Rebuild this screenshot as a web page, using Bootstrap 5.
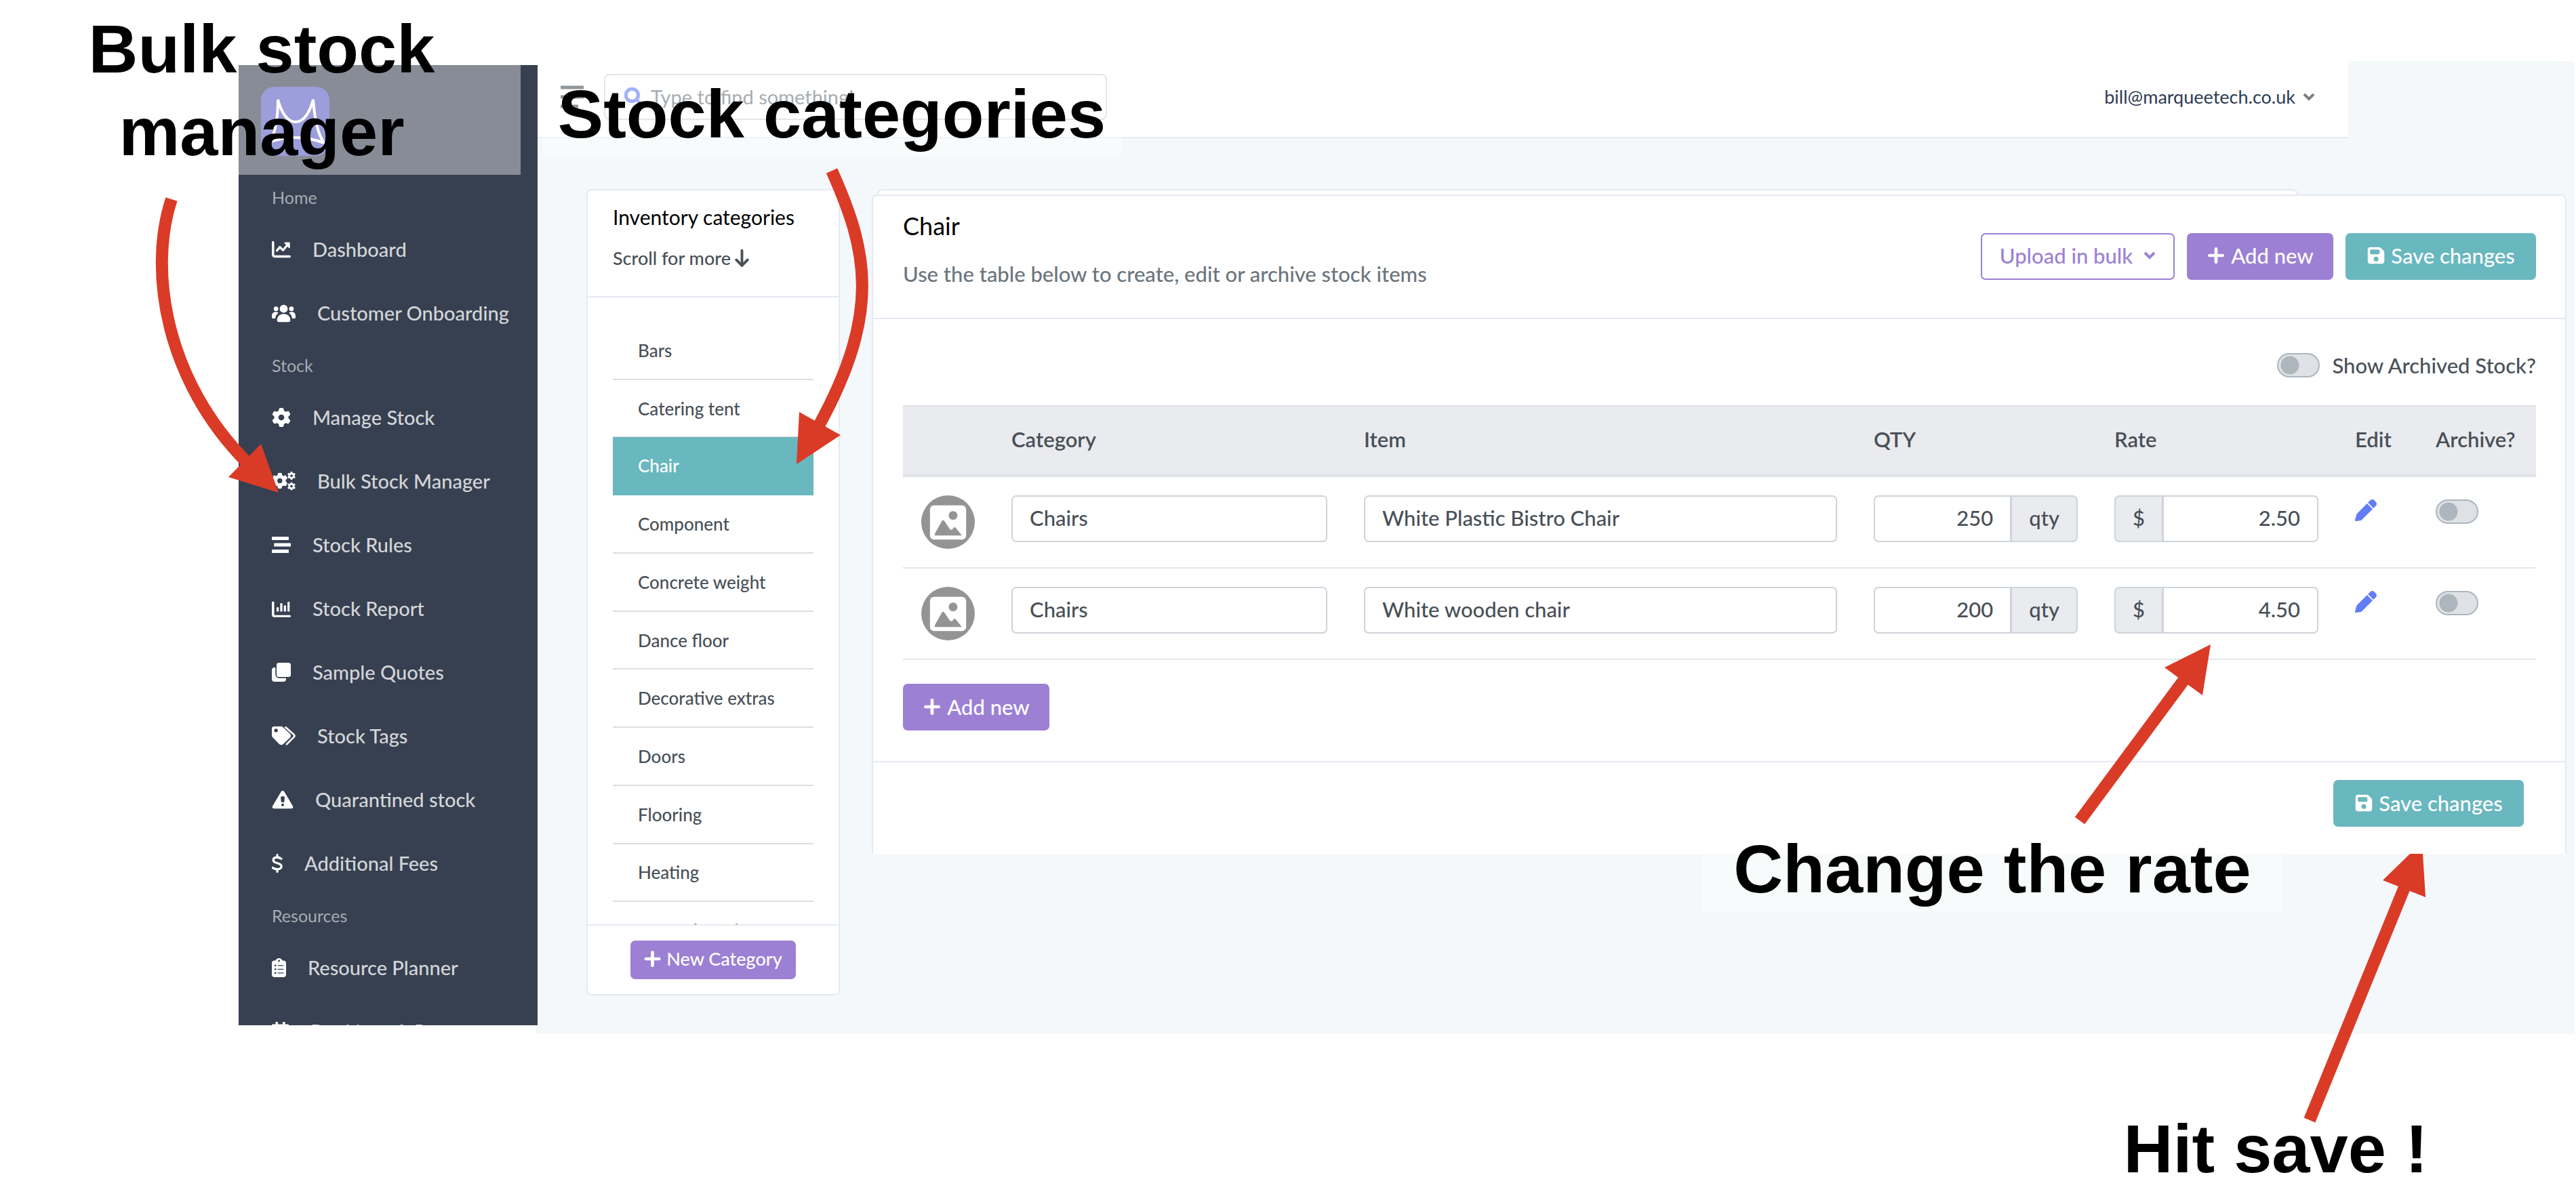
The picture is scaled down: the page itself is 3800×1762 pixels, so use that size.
<!DOCTYPE html>
<html lang="en">
<head>
<meta charset="utf-8">
<meta name="viewport" content="width=device-width, initial-scale=1">
<title>Bulk Stock Manager</title>
<link rel="stylesheet" href="https://cdn.jsdelivr.net/npm/bootstrap@5.3.0/dist/css/bootstrap.min.css">
<style>
:root{--ink:#495057;--line:#e6e9f2;--purple:#9c80d4;--teal:#69b7bf;--navy:#374050;--red:#da3b27}
body{font-family:Lato,"Open Sans",sans-serif;font-size:31px;line-height:44px;color:var(--ink);background:#fff;font-weight:500}
/* icons: one height, widths by the shape of each glyph */
.ico{height:28px;width:28px;fill:currentColor;flex:none;display:block}
.ico-xw{width:35px}.ico-w{width:32px}.ico-m{width:25px}.ico-n{width:21px}.ico-xn{width:16px}
.guide{position:relative;overflow:hidden;min-height:1762px}
.shell{padding:90px 2px 0 352px}
/* sidebar */
.side{width:441px;height:1417px;margin-top:6px;background:var(--navy);overflow:hidden;position:relative;z-index:1;flex:none}
.brand-box{height:165px;padding:32px 33px 0}
.side .nav-link{height:94px;padding:0 0 0 49px;gap:32px;color:#d3d6da;font-size:29px;white-space:nowrap;display:flex;align-items:center}
.side .nav-link .ico{color:#fff}
.side-title{height:60px;padding-left:49px;font-size:25px;color:#a6acb3;display:flex;align-items:center;margin:0;font-weight:400}
/* main */
.stagebg{background:#f4f8fb;height:1436px;margin-left:-3px;min-width:0}
.topbar{height:114px;margin-right:334px;background:#fff;border-bottom:2px solid var(--line);padding:0 49px 6px 37px;gap:30px}
.finder{width:742px;height:68px;border:2px solid #cfd5db;border-radius:8px;padding:0 28px;gap:11px;background:#fff}
.finder .ico{color:#637cf8}
.finder input{border:0;padding:0;font-size:29px;color:var(--ink);background:none}
.finder input::placeholder{color:#6c757d;opacity:1}
.user-link{font-size:27px;line-height:40px;font-weight:400;color:#2f3b52;text-decoration:none;gap:11px}
.chev{width:18px;height:12px;flex:none}
.chev-grey{color:#7b7f86}
.boards{padding:75px 12px 0 75px;gap:47px}
.panel{background:#fff;border:2px solid var(--line);border-radius:8px}
.cats{width:374px;height:1190px;flex:none}
.cats-head{height:158px;padding:17px 37px 0;border-bottom:2px solid var(--line);font-size:27px}
.cats-head h2{font-size:30px;line-height:44px;color:#000;margin:0 0 17px;font-weight:400;white-space:nowrap}
.cats-scroll{height:925px;overflow:hidden;padding:36px 37px 0}
.cats-list{height:940px}
.cats-list .list-group-item{flex:1 1 0;padding:0 37px;border:0;border-bottom:2px solid #ddd;font-size:26px;color:var(--ink);display:flex;align-items:center}
.cats-list .list-group-item.active{background:var(--teal);color:#fff;border-color:var(--teal)}
.cats-foot{border-top:2px solid var(--line);height:102px}
.stock{margin-top:8px;height:973px;position:relative;border-bottom:0;border-radius:8px 8px 0 0;min-width:0}
.stock-wrap{position:relative;z-index:0;min-width:0}
/* empty panel that peeks out behind the stock panel */
.stock-wrap::before{content:"";position:absolute;z-index:-1;top:0;left:8px;right:396px;height:40px;background:#fff;border:2px solid var(--line);border-radius:8px}
.stock-head{height:182px;padding:0 43px 2px 44px;border-bottom:2px solid var(--line)}
.stock-head h1{font-size:36px;line-height:44px;color:#000;margin:0 0 27px;font-weight:400}
.stock-head p{margin:0;color:#6c757d}
.stock-head-text{padding-top:22px}
.head-actions{gap:18px}
.btn{--bs-btn-font-size:31px;--bs-btn-line-height:44px;--bs-btn-font-weight:500;--bs-btn-border-width:2px;--bs-btn-border-radius:7px;height:69px;padding:0 24px 2px;display:inline-flex;align-items:center;gap:8px;white-space:nowrap}
.btn-lilac,.btn-lilac:hover{background:var(--purple);color:#fff}
.btn-aqua,.btn-aqua:hover{background:var(--teal);color:#fff}
.btn-line,.btn-line:hover{border-color:var(--purple);color:var(--purple);background:#fff;gap:16px}
.btn-sm-cat{--bs-btn-font-size:27px;height:57px;padding:0 21px 2px;gap:8px}
.w-up{width:286px}.w-add{width:216px}.w-save{width:281px}.w-cat{width:244px}
.stock-body{padding:0 43px 0 44px;height:652px}
.archived{padding:46px 0 37px;gap:18px}
.form-check-input.tog{width:63px;height:36px;margin:0;border:2px solid #adb5bd;background-color:#dee2e6;background-image:radial-gradient(circle,#adb5bd 13px,transparent 14px);background-size:28px 28px;background-position:3px center;border-radius:18px;float:none;flex:none;display:block}
.stock-table{table-layout:fixed;border-collapse:separate;border-spacing:0;margin:0 0 35px;color:var(--ink)}
.stock-table th{background:#eaebef;border-top:2px solid #dee2e6;border-bottom:4px solid #dee2e6;height:106px;padding:0 27px 4px;vertical-align:middle;font-weight:600;color:var(--ink)}
.stock-table td{height:135px;padding:27px 27px 0;border-bottom:2px solid #e3e6ea;vertical-align:top;background:none}
.c-img{width:133px}.c-cat{width:520px}.c-num{width:355px}.c-edit{width:119px}.c-arc{width:175px}
.field,.stock-table .input-group-text{height:69px;border:2px solid #ced4da;border-radius:7px;font-size:31px;line-height:44px;color:var(--ink);padding:0 25px 3px;font-weight:500}
.stock-table .input-group-text{background:#eaebef}
.thumb{width:79px;height:79px;display:block}
.pencil{color:#637cf8;display:block;margin-top:6px}
.pencil .ico{height:32px;width:32px}
.form-check-input.td-tog{margin-top:6px}
.stock-foot{height:137px;border-top:2px solid var(--line);padding:26px 61px 0}
/* annotations */
.note{position:absolute;font-family:"Liberation Sans",Arial,sans-serif;font-weight:700;font-size:101px;line-height:122px;color:#000;background:rgba(255,255,255,.4);text-align:center;white-space:nowrap;margin:0;z-index:3;padding:0 0 3px}
.n-bulk{left:4px;top:11px;width:764px}
.n-cats{left:800px;top:107px;width:854px}
.n-rate{left:2512px;top:1221px;width:854px}
.n-save{left:3122px;top:1634px;width:470px}
.arrows{position:absolute;left:0;top:0;width:3800px;height:1762px;z-index:4;pointer-events:none}
</style>
<script src="https://cdn.jsdelivr.net/npm/bootstrap@5.3.0/dist/js/bootstrap.bundle.min.js"></script>
</head>
<body>
<svg width="0" height="0" class="position-absolute" aria-hidden="true">
  <symbol id="i-plus" viewBox="0 0 448 512"><path d="M256 80c0-17.700-14.300-32-32-32s-32 14.300-32 32V224H48c-17.700 0-32 14.300-32 32s14.300 32 32 32H192V432c0 17.700 14.300 32 32 32s32-14.300 32-32V288H400c17.700 0 32-14.300 32-32s-14.300-32-32-32H256V80z" stroke="currentColor" stroke-width="22"/></symbol>
  <symbol id="i-gear" viewBox="0 0 512 512"><path d="M495.9 166.6c3.200 8.700 .5 18.400-6.400 24.600l-43.300 39.400c1.100 8.300 1.700 16.800 1.700 25.400s-.6 17.100-1.700 25.400l43.300 39.400c6.900 6.200 9.600 15.900 6.400 24.600c-4.400 11.900-9.700 23.300-15.800 34.300l-4.700 8.100c-6.600 11-14 21.400-22.100 31.200c-5.900 7.200-15.700 9.600-24.500 6.800l-55.700-17.700c-13.400 10.300-28.200 18.900-44 25.400l-12.500 57.100c-2 9.100-9 16.300-18.200 17.800c-13.800 2.300-28 3.500-42.500 3.500s-28.700-1.200-42.500-3.500c-9.200-1.500-16.200-8.700-18.200-17.800l-12.500-57.100c-15.800-6.500-30.600-15.100-44-25.400L83.100 425.900c-8.800 2.800-18.600 .3-24.500-6.800c-8.100-9.800-15.500-20.200-22.100-31.200l-4.700-8.100c-6.100-11-11.400-22.400-15.800-34.300c-3.200-8.700-.5-18.400 6.400-24.600l43.300-39.400C64.600 273.100 64 264.600 64 256s.6-17.100 1.700-25.400L22.400 191.200c-6.900-6.200-9.600-15.900-6.400-24.600c4.400-11.900 9.700-23.300 15.800-34.300l4.700-8.100c6.600-11 14-21.400 22.100-31.200c5.900-7.200 15.700-9.600 24.500-6.800l55.700 17.700c13.400-10.300 28.200-18.900 44-25.400l12.500-57.100c2-9.100 9-16.300 18.200-17.800C227.300 1.200 241.500 0 256 0s28.700 1.200 42.500 3.500c9.200 1.500 16.200 8.700 18.200 17.800l12.500 57.100c15.800 6.500 30.600 15.100 44 25.400l55.700-17.700c8.800-2.800 18.600-.3 24.500 6.800c8.100 9.800 15.500 20.200 22.100 31.200l4.700 8.100c6.100 11 11.400 22.400 15.800 34.300zM256 336a80 80 0 1 0 0-160 80 80 0 1 0 0 160z"/></symbol>
  <symbol id="i-gears" viewBox="0 0 640 512"><use href="#i-gear" x="0" y="30" width="430" height="430"/><use href="#i-gear" x="420" y="0" width="220" height="220"/><use href="#i-gear" x="420" y="285" width="220" height="220"/></symbol>
  <symbol id="i-chart" viewBox="0 0 512 512"><path d="M32 32c18 0 32 14 32 32v336c0 9 7 16 16 16h400c18 0 32 14 32 32s-14 32-32 32H80c-44 0-80-36-80-80V64c0-18 14-32 32-32z"/><path d="M136 290l80-96 84 84 130-150" fill="none" stroke="currentColor" stroke-width="60" stroke-linejoin="round" stroke-linecap="round"/><path d="M352 64h120c9 0 16 7 16 16v130c0 14-17 21-27 11L341 91c-10-10-3-27 11-27z"/></symbol>
  <symbol id="i-users" viewBox="0 0 640 512"><circle cx="320" cy="140" r="108"/><circle cx="112" cy="140" r="62"/><circle cx="528" cy="140" r="62"/><path d="M320 280c110 0 180 70 180 170 0 30-10 46-40 46H180c-30 0-40-16-40-46 0-100 70-170 180-170zM0 330c0-65 40-106 105-106 30 0 55 10 72 26-50 36-80 90-84 150H30c-20 0-30-12-30-30zM640 330c0-65-40-106-105-106-30 0-55 10-72 26 50 36 80 90 84 150h63c20 0 30-12 30-30z"/></symbol>
  <symbol id="i-rules" viewBox="0 0 512 512"><rect x="0" y="36" width="456" height="92" rx="16"/><rect x="60" y="210" width="452" height="92" rx="16"/><rect x="0" y="384" width="456" height="92" rx="16"/></symbol>
  <symbol id="i-bars" viewBox="0 0 512 512"><path d="M32 64c18 0 32 14 32 32v320c0 9 7 16 16 16h400c18 0 32 10 32 28s-14 28-32 28H60c-40 0-60-26-60-60V96c0-18 14-32 32-32z"/><rect x="128" y="220" width="58" height="120" rx="22"/><rect x="226" y="110" width="58" height="230" rx="22"/><rect x="324" y="170" width="58" height="170" rx="22"/><rect x="422" y="75" width="58" height="265" rx="22"/></symbol>
  <symbol id="i-clone" viewBox="0 0 512 512"><rect x="128" y="0" width="384" height="384" rx="64"/><path d="M96 128H64c-35 0-64 29-64 64v256c0 35 29 64 64 64h256c35 0 64-29 64-64v-32H208c-62 0-112-50-112-112z"/></symbol>
  <symbol id="i-tags" viewBox="0 0 640 512"><path fill-rule="evenodd" d="M0 56v190c0 18 7 35 20 48l184 184c28 28 72 28 100 0l188-176c28-26 28-74 0-100L300 20C288 8 272 0 254 0H56C24 0 0 24 0 56zM112 60a48 48 0 1 1 0 97 48 48 0 1 1 0-97z"/><path d="M372 24l220 196c20 20 20 50 0 70L400 480" fill="none" stroke="currentColor" stroke-width="50" stroke-linecap="round"/></symbol>
  <symbol id="i-warn" viewBox="0 0 576 512"><path fill-rule="evenodd" d="M288 16c20 0 34 10 42 24l234 396c16 30-4 60-36 60H48c-32 0-52-30-36-60L246 40c8-14 22-24 42-24zM262 170c-18 0-28 8-27 26l9 110c1 14 9 22 22 22h44c13 0 21-8 22-22l9-110c1-18-9-26-27-26zM288 360a38 38 0 1 0 0 76 38 38 0 1 0 0-76z"/></symbol>
  <symbol id="i-dollar" viewBox="0 0 300 512"><path d="M260 130c-30-26-70-38-115-38-60 0-105 26-105 76 0 110 225 56 225 172 0 52-50 80-115 80-48 0-90-14-125-40M150 24v66M150 420v68" fill="none" stroke="currentColor" stroke-width="62" stroke-linecap="round"/></symbol>
  <symbol id="i-clip" viewBox="0 0 384 512"><path fill-rule="evenodd" d="M192 0c42 0 78 27 90 64h38c35 0 64 29 64 64v320c0 35-29 64-64 64H64c-35 0-64-29-64-64V128c0-35 29-64 64-64h38C114 27 150 0 192 0zM192 46a26 26 0 1 0 0 53 26 26 0 1 0 0-53zM72 180v40h46v-40zM158 188v24h160v-24zM72 280v40h46v-40zM158 288v24h160v-24zM72 380v40h46v-40zM158 388v24h160v-24z"/></symbol>
  <symbol id="i-cal" viewBox="0 0 448 512"><path d="M96 0h64v64h128V0h64v64h96v448H0V64h96z"/></symbol>
  <symbol id="i-search" viewBox="0 0 512 512"><path d="M416 208c0 45.900-14.900 88.300-40 122.700L502.600 457.400c12.500 12.500 12.500 32.800 0 45.300s-32.800 12.500-45.300 0L330.700 376c-34.400 25.200-76.800 40-122.700 40C93.100 416 0 322.900 0 208S93.100 0 208 0S416 93.100 416 208zM208 335a127 127 0 1 0 0-254 127 127 0 1 0 0 254z" stroke="currentColor" stroke-width="14"/></symbol>
  <symbol id="i-save" viewBox="0 0 448 512"><path d="M64 32C28.700 32 0 60.700 0 96V416c0 35.300 28.700 64 64 64H384c35.300 0 64-28.700 64-64V173.300c0-17-6.700-33.300-18.700-45.300L352 50.700C340 38.700 323.700 32 306.700 32H64zm0 96c0-17.700 14.300-32 32-32H288c17.700 0 32 14.300 32 32v64c0 17.700-14.300 32-32 32H96c-17.700 0-32-14.300-32-32V128zM224 288a64 64 0 1 1 0 128 64 64 0 1 1 0-128z"/></symbol>
  <symbol id="i-down" viewBox="0 0 384 512"><path d="M192 50v400M40 300l152 158 152-158" fill="none" stroke="currentColor" stroke-width="70" stroke-linecap="round" stroke-linejoin="round"/></symbol>
  <symbol id="i-chev" viewBox="0 0 18 12"><path d="M2 2l7 7 7-7" fill="none" stroke="currentColor" stroke-width="4"/></symbol>
  <symbol id="i-pen" viewBox="0 0 512 512"><path d="M362 20c25-25 66-25 91 0l39 39c25 25 25 66 0 91l-57 57L305 77zM285 97l130 130-252 252c-10 10-22 17-35 21L28 511c-16 4-32-11-27-27l31-118c4-13 11-25 20-35z"/></symbol>
  <symbol id="i-image" viewBox="0 0 80 80"><circle cx="40" cy="40" r="40" fill="#949494"/><rect x="13" y="15" width="54" height="51" rx="6" fill="#fff"/><circle cx="47.500" cy="30" r="6.500" fill="#949494"/><path d="M20 60q0-2 1-4l10-18q2-2 4 1l8 12q2 1 4-1 3-4 5-1l7 9q2 2 1 2z" fill="#949494"/></symbol>
</svg>

<div class="guide">
  <div class="shell d-flex">
    <nav class="side" aria-label="Main">
      <a class="brand-box d-block" href="#" aria-label="Home">
        <svg width="101" height="102" viewBox="0 0 101 102" class="d-block"><rect width="101" height="102" rx="20" fill="#5a5dc3"/><path d="M25 19c5 19 14 33 26 33s21-14 26-33c2 28 6 50 16 64-26-10-54-10-79-2 9-18 11-40 11-62z" fill="none" stroke="#fff" stroke-width="4"/></svg>
      </a>
      <h6 class="side-title">Home</h6>
      <div class="nav flex-column flex-nowrap">
        <a class="nav-link" href="#"><svg class="ico"><use href="#i-chart"/></svg>Dashboard</a>
        <a class="nav-link" href="#"><svg class="ico ico-xw"><use href="#i-users"/></svg>Customer Onboarding</a>
      </div>
      <h6 class="side-title">Stock</h6>
      <div class="nav flex-column flex-nowrap">
        <a class="nav-link" href="#"><svg class="ico"><use href="#i-gear"/></svg>Manage Stock</a>
        <a class="nav-link" href="#"><svg class="ico ico-xw"><use href="#i-gears"/></svg>Bulk Stock Manager</a>
        <a class="nav-link" href="#"><svg class="ico"><use href="#i-rules"/></svg>Stock Rules</a>
        <a class="nav-link" href="#"><svg class="ico"><use href="#i-bars"/></svg>Stock Report</a>
        <a class="nav-link" href="#"><svg class="ico"><use href="#i-clone"/></svg>Sample Quotes</a>
        <a class="nav-link" href="#"><svg class="ico ico-xw"><use href="#i-tags"/></svg>Stock Tags</a>
        <a class="nav-link" href="#"><svg class="ico ico-w"><use href="#i-warn"/></svg>Quarantined stock</a>
        <a class="nav-link" href="#"><svg class="ico ico-xn"><use href="#i-dollar"/></svg>Additional Fees</a>
      </div>
      <h6 class="side-title">Resources</h6>
      <div class="nav flex-column flex-nowrap">
        <a class="nav-link" href="#"><svg class="ico ico-n"><use href="#i-clip"/></svg>Resource Planner</a>
        <a class="nav-link" href="#"><svg class="ico ico-m"><use href="#i-cal"/></svg>Bookings &amp; Resources</a>
      </div>
    </nav>

    <div class="stagebg flex-grow-1">
      <header class="topbar d-flex align-items-center">
        <button type="button" class="border-0 bg-transparent p-0" aria-label="Toggle menu"><svg width="34" height="34" viewBox="0 0 34 34" class="d-block"><path d="M0 3h34M0 17h34M0 31h26" stroke="#495057" stroke-width="5"/></svg></button>
        <div class="finder d-flex align-items-center">
          <svg class="ico"><use href="#i-search"/></svg>
          <input type="text" class="form-control" aria-label="Search" placeholder="Type to find something!">
        </div>
        <a class="user-link d-flex align-items-center ms-auto" href="#">bill@marqueetech.co.uk <svg class="chev chev-grey"><use href="#i-chev"/></svg></a>
      </header>

      <div class="boards d-flex align-items-start">
        <section class="cats panel">
          <div class="cats-head">
            <h2>Inventory categories</h2>
            <div class="d-flex align-items-center gap-1">Scroll for more <svg class="ico ico-m"><use href="#i-down"/></svg></div>
          </div>
          <div class="cats-scroll">
            <div class="cats-list list-group list-group-flush">
              <a href="#" class="list-group-item">Bars</a>
              <a href="#" class="list-group-item">Catering tent</a>
              <a href="#" class="list-group-item active" aria-current="true">Chair</a>
              <a href="#" class="list-group-item">Component</a>
              <a href="#" class="list-group-item">Concrete weight</a>
              <a href="#" class="list-group-item">Dance floor</a>
              <a href="#" class="list-group-item">Decorative extras</a>
              <a href="#" class="list-group-item">Doors</a>
              <a href="#" class="list-group-item">Flooring</a>
              <a href="#" class="list-group-item">Heating</a>
              <a href="#" class="list-group-item">Internal furniture</a>
            </div>
          </div>
          <div class="cats-foot d-flex align-items-center justify-content-center">
            <button type="button" class="btn btn-lilac btn-sm-cat w-cat justify-content-center"><svg class="ico ico-m"><use href="#i-plus"/></svg>New Category</button>
          </div>
        </section>

        <div class="stock-wrap flex-grow-1">
          <section class="stock panel">
            <div class="stock-head d-flex justify-content-between">
              <div class="stock-head-text">
                <h1>Chair</h1>
                <p>Use the table below to create, edit or archive stock items</p>
              </div>
              <div class="head-actions d-flex align-items-center">
                <button type="button" class="btn btn-line w-up justify-content-center">Upload in bulk <svg class="chev"><use href="#i-chev"/></svg></button>
                <button type="button" class="btn btn-lilac w-add justify-content-center"><svg class="ico"><use href="#i-plus"/></svg>Add new</button>
                <button type="button" class="btn btn-aqua w-save justify-content-center"><svg class="ico"><use href="#i-save"/></svg>Save changes</button>
              </div>
            </div>
            <div class="stock-body">
              <div class="archived d-flex justify-content-end align-items-center">
                <input class="form-check-input tog" type="checkbox" id="showArchived">
                <label for="showArchived">Show Archived Stock?</label>
              </div>
              <table class="table table-borderless stock-table">
                <thead><tr><th class="c-img"></th><th class="c-cat">Category</th><th>Item</th><th class="c-num">QTY</th><th class="c-num">Rate</th><th class="c-edit">Edit</th><th class="c-arc">Archive?</th></tr></thead>
                <tbody>
                  <tr>
                    <td><svg class="thumb"><use href="#i-image"/></svg></td>
                    <td><input type="text" class="form-control field" aria-label="Category" value="Chairs"></td>
                    <td><input type="text" class="form-control field" aria-label="Item" value="White Plastic Bistro Chair"></td>
                    <td><div class="input-group"><input type="text" class="form-control field text-end" aria-label="Quantity" value="250"><span class="input-group-text">qty</span></div></td>
                    <td><div class="input-group"><span class="input-group-text">$</span><input type="text" class="form-control field text-end" aria-label="Rate" value="2.50"></div></td>
                    <td><a href="#" class="pencil" aria-label="Edit"><svg class="ico"><use href="#i-pen"/></svg></a></td>
                    <td><input class="form-check-input tog td-tog" type="checkbox" aria-label="Archive"></td>
                  </tr>
                  <tr>
                    <td><svg class="thumb"><use href="#i-image"/></svg></td>
                    <td><input type="text" class="form-control field" aria-label="Category" value="Chairs"></td>
                    <td><input type="text" class="form-control field" aria-label="Item" value="White wooden chair"></td>
                    <td><div class="input-group"><input type="text" class="form-control field text-end" aria-label="Quantity" value="200"><span class="input-group-text">qty</span></div></td>
                    <td><div class="input-group"><span class="input-group-text">$</span><input type="text" class="form-control field text-end" aria-label="Rate" value="4.50"></div></td>
                    <td><a href="#" class="pencil" aria-label="Edit"><svg class="ico"><use href="#i-pen"/></svg></a></td>
                    <td><input class="form-check-input tog td-tog" type="checkbox" aria-label="Archive"></td>
                  </tr>
                </tbody>
              </table>
              <button type="button" class="btn btn-lilac w-add justify-content-center"><svg class="ico"><use href="#i-plus"/></svg>Add new</button>
            </div>
            <div class="stock-foot d-flex justify-content-end">
              <button type="button" class="btn btn-aqua w-save justify-content-center"><svg class="ico"><use href="#i-save"/></svg>Save changes</button>
            </div>
          </section>
        </div>
      </div>
    </div>
  </div>

  <p class="note n-bulk">Bulk stock<br>manager</p>
  <p class="note n-cats">Stock categories</p>
  <p class="note n-rate">Change the rate</p>
  <p class="note n-save">Hit save !</p>
  <svg class="arrows" viewBox="0 0 3800 1762" aria-hidden="true">
    <g fill="none" stroke="#da3b27" stroke-width="18">
      <path d="M253 294C218 400 245 563 365 683"/>
      <path d="M1227 252C1280 370 1300 460 1208 628"/>
      <path d="M3068 1211L3222 1003"/>
      <path d="M3407 1653L3548 1307"/>
    </g>
    <g fill="#da3b27">
      <path d="M385 655L337 704L411 727z"/>
      <path d="M1179 608L1240 642L1175 685z"/>
      <path d="M3193 985L3249 1026L3261 951z"/>
      <path d="M3515 1299L3578 1324L3574 1260H3555z"/>
    </g>
  </svg>
</div>
</body>
</html>
